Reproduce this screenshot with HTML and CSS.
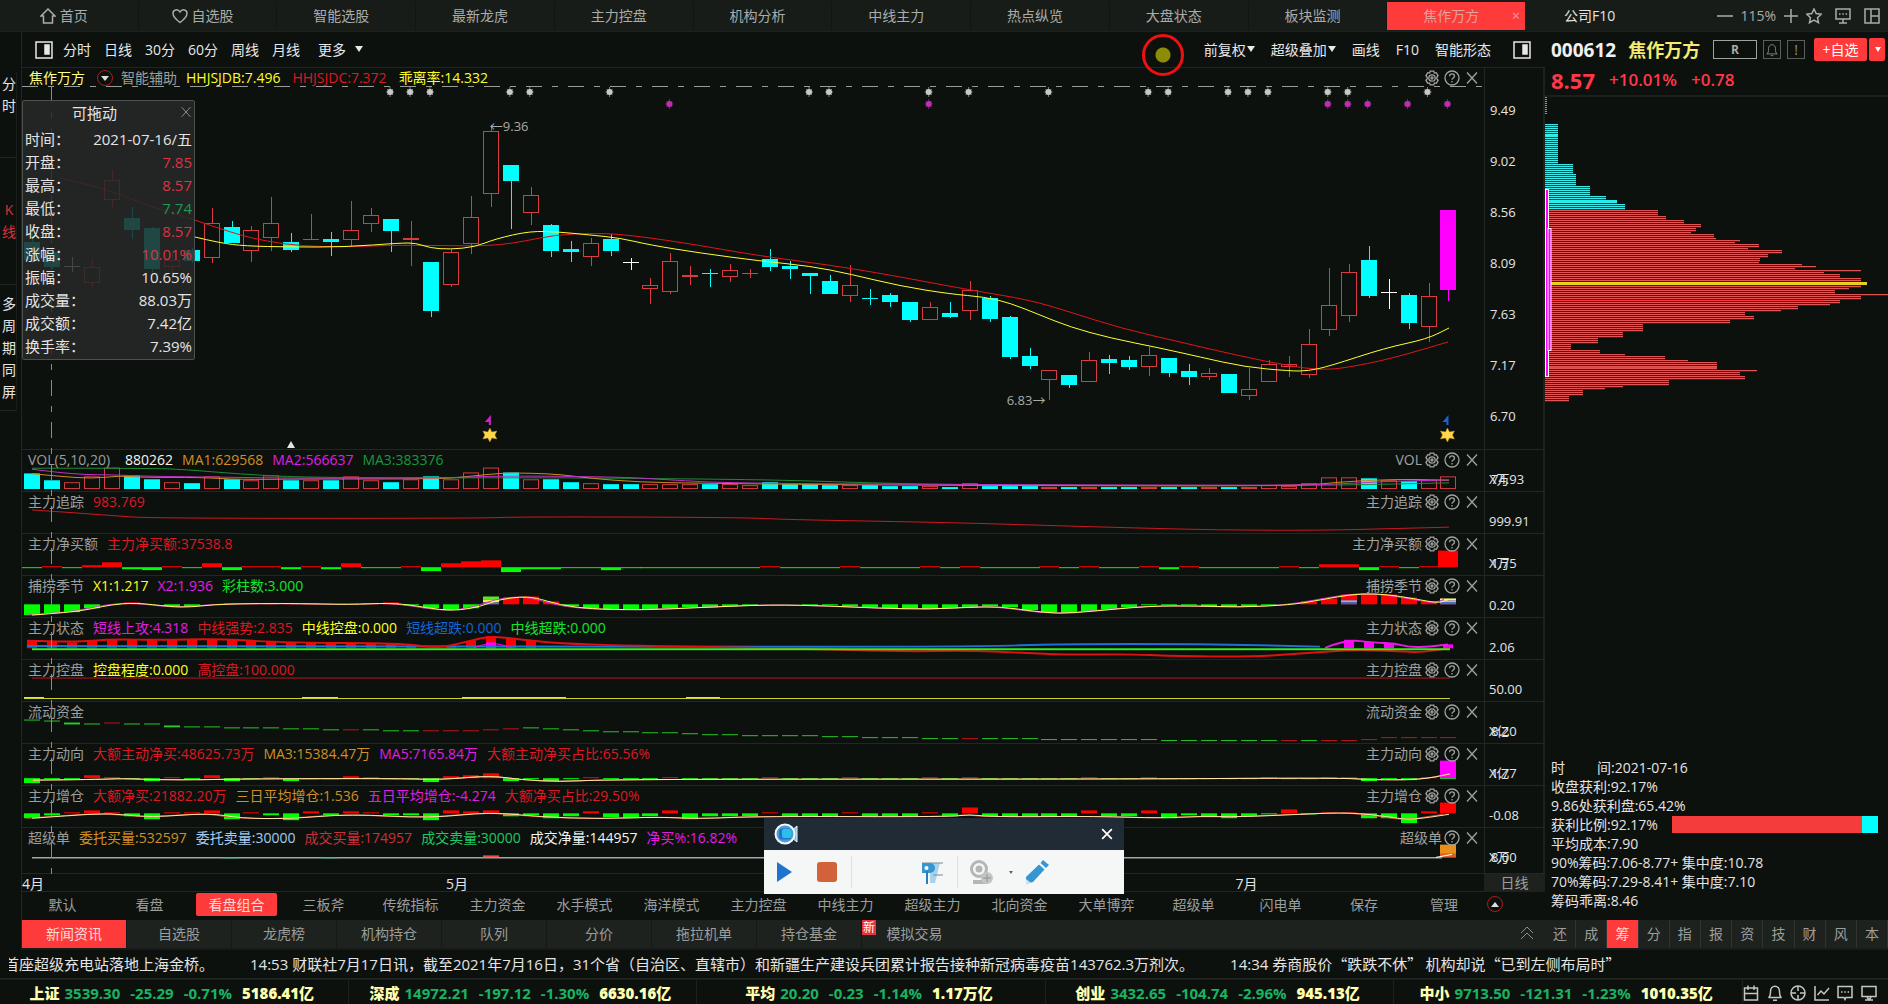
FILE: index.html
```html
<!DOCTYPE html>
<html lang="zh-CN">
<head>
<meta charset="utf-8">
<meta name="viewport" content="width=device-width, initial-scale=1">
<title>焦作万方 000612</title>
<link rel="stylesheet" href="styles.css">
</head>
<body>
<svg class="defs" aria-hidden="true">
  <symbol id="gear" viewBox="0 0 16 16"><path d="M6.200 1.200h3.600l.6 1.900 1.900-.4 1.800 3.100-1.300 1.500v1.400l1.300 1.500-1.800 3.100-1.900-.4-.6 1.900H6.200l-.6-1.900-1.900.4-1.800-3.100 1.300-1.500V7.300L1.900 5.800l1.800-3.100 1.900.4z"/><circle cx="8" cy="8" r="3.200"/><circle cx="8" cy="8" r="1"/></symbol>
  <symbol id="help" viewBox="0 0 16 16"><circle cx="8" cy="8" r="7"/><path d="M5.500 6.300c0-3.300 5-3.300 5 0 0 1.700-2.500 1.700-2.500 3.400M8 11v1.400"/></symbol>
  <symbol id="close" viewBox="0 0 16 16"><path d="M3 2.500l10 11M13 2.500l-10 11"/></symbol>
  <symbol id="pane" viewBox="0 0 18 18"><path d="M1 1h16v16H1z"/><path d="M10 4h4v9h-4z" fill="currentColor"/></symbol>
</svg>
<div class="app">
  <header class="topbar">
    <nav class="top-tabs">
      <button class="top-tab"><svg class="ic" viewBox="0 0 16 16"><path d="M1 8l7-7 7 7h-2.500v7h-9V8z"/></svg>首页</button>
      <button class="top-tab"><svg class="ic" viewBox="0 0 16 16"><path d="M8 14.500C2 10 1 7.500 1 5.200 1 1.500 6 .5 8 4c2-3.500 7-2.500 7 1.200 0 2.300-1 4.800-7 9.300z"/></svg>自选股</button>
      <button class="top-tab">智能选股</button>
      <button class="top-tab">最新龙虎</button>
      <button class="top-tab">主力控盘</button>
      <button class="top-tab">机构分析</button>
      <button class="top-tab">中线主力</button>
      <button class="top-tab">热点纵览</button>
      <button class="top-tab">大盘状态</button>
      <button class="top-tab">板块监测</button>
      <button class="top-tab active">焦作万方<span class="tab-x">×</span></button>
    </nav>
    <button class="company">公司F10</button>
    <div class="window-tools">
      <svg class="ic" viewBox="0 0 16 16"><path d="M0 8h16"/></svg>
      <span>115%</span>
      <svg class="ic" viewBox="0 0 16 16"><path d="M1 8h14M8 1v14"/></svg>
      <svg class="ic" viewBox="0 0 16 16"><path d="M8 1l2.200 4.600 5 .6-3.700 3.500 1 5L8 12.200l-4.500 2.500 1-5L.8 6.200l5-.6z"/></svg>
      <svg class="ic far" viewBox="0 0 16 16"><path d="M1 1h14v10H1zM8 11v4M4 15h8M4 6h1.500M7.300 6h1.500M10.600 6h1.500"/></svg>
      <svg class="ic far" viewBox="0 0 16 16"><path d="M1 1h14v14H1zM7 1v14M7 8h8"/></svg>
    </div>
  </header>

  <div class="body">
    <nav class="rail">
      <button class="rail-item r1">分时</button>
      <button class="rail-item r2 hot">K线</button>
      <button class="rail-item r3">多周期同屏</button>
    </nav>

    <main class="main">
      <div class="toolbar">
        <div class="tool-group">
          <svg class="pane"><use href="#pane"/></svg>
          <button>分时</button><button>日线</button><button>30分</button><button>60分</button><button>周线</button><button>月线</button>
          <button class="more">更多 <i class="caret"></i></button>
        </div>
        <div class="tool-group right">
          <button>前复权<i class="caret"></i></button><button>超级叠加<i class="caret"></i></button><button>画线</button><button>F10</button><button>智能形态</button>
          <svg class="pane last"><use href="#pane"/></svg>
        </div>
        <span class="pointer"></span>
      </div>

      <div class="charts">
        <section class="panel price">
          <div class="plot">
            <svg class="art" id="price" viewBox="0 0 1462 381" preserveAspectRatio="none"></svg>
            <div class="legend"><span class="c-pale">焦作万方</span><span class="drop"><i class="caret"></i></span><span class="aid">智能辅助</span><span class="c-yellow">HHJSJDB:7.496</span><span class="c-red">HHJSJDC:7.372</span><span class="c-yellow">乖离率:14.332</span></div>
            <div class="tools"><svg><use href="#gear"/></svg><svg><use href="#help"/></svg><svg><use href="#close"/></svg></div>
            <span class="peak">←9.36</span>
            <span class="trough">6.83→</span>
          </div>
          <div class="axis scale"><span>9.49</span><span>9.02</span><span>8.56</span><span>8.09</span><span>7.63</span><span>7.17</span><span>6.70</span></div>
        </section>

        <section class="panel">
          <div class="plot"><svg class="art" id="vol" viewBox="0 0 1462 42" preserveAspectRatio="none"></svg>
            <div class="legend"><span>VOL(5,10,20)</span><span class="c-white gap">880262</span><span class="c-orange">MA1:629568</span><span class="c-magenta">MA2:566637</span><span class="c-green">MA3:383376</span></div>
            <div class="tools"><span>VOL</span><svg><use href="#gear"/></svg><svg><use href="#help"/></svg><svg><use href="#close"/></svg></div></div>
          <div class="axis"><span>X万</span><span class="over">74.93</span></div>
        </section>
        <section class="panel">
          <div class="plot"><svg class="art" id="track" viewBox="0 0 1462 42" preserveAspectRatio="none"></svg>
            <div class="legend"><span>主力追踪</span><span class="c-red">983.769</span></div>
            <div class="tools"><span>主力追踪</span><svg><use href="#gear"/></svg><svg><use href="#help"/></svg><svg><use href="#close"/></svg></div></div>
          <div class="axis"><span>999.91</span></div>
        </section>
        <section class="panel">
          <div class="plot"><svg class="art" id="net" viewBox="0 0 1462 42" preserveAspectRatio="none"></svg>
            <div class="legend"><span>主力净买额</span><span class="c-red">主力净买额:37538.8</span></div>
            <div class="tools"><span>主力净买额</span><svg><use href="#gear"/></svg><svg><use href="#help"/></svg><svg><use href="#close"/></svg></div></div>
          <div class="axis"><span>X万</span><span class="over">1.75</span></div>
        </section>
        <section class="panel">
          <div class="plot"><svg class="art" id="season" viewBox="0 0 1462 42" preserveAspectRatio="none"></svg>
            <div class="legend"><span>捕捞季节</span><span class="c-yellow">X1:1.217</span><span class="c-magenta">X2:1.936</span><span class="c-lime">彩柱数:3.000</span></div>
            <div class="tools"><span>捕捞季节</span><svg><use href="#gear"/></svg><svg><use href="#help"/></svg><svg><use href="#close"/></svg></div></div>
          <div class="axis"><span>0.20</span></div>
        </section>
        <section class="panel">
          <div class="plot"><svg class="art" id="state" viewBox="0 0 1462 42" preserveAspectRatio="none"></svg>
            <div class="legend"><span>主力状态</span><span class="c-magenta">短线上攻:4.318</span><span class="c-red">中线强势:2.835</span><span class="c-yellow">中线控盘:0.000</span><span class="c-blue">短线超跌:0.000</span><span class="c-lime">中线超跌:0.000</span></div>
            <div class="tools"><span>主力状态</span><svg><use href="#gear"/></svg><svg><use href="#help"/></svg><svg><use href="#close"/></svg></div></div>
          <div class="axis"><span>2.06</span></div>
        </section>
        <section class="panel">
          <div class="plot"><svg class="art" id="control" viewBox="0 0 1462 42" preserveAspectRatio="none"></svg>
            <div class="legend"><span>主力控盘</span><span class="c-yellow">控盘程度:0.000</span><span class="c-red">高控盘:100.000</span></div>
            <div class="tools"><span>主力控盘</span><svg><use href="#gear"/></svg><svg><use href="#help"/></svg><svg><use href="#close"/></svg></div></div>
          <div class="axis"><span>50.00</span></div>
        </section>
        <section class="panel">
          <div class="plot"><svg class="art" id="flow" viewBox="0 0 1462 42" preserveAspectRatio="none"></svg>
            <div class="legend"><span>流动资金</span></div>
            <div class="tools"><span>流动资金</span><svg><use href="#gear"/></svg><svg><use href="#help"/></svg><svg><use href="#close"/></svg></div></div>
          <div class="axis"><span>X亿</span><span class="over">8.20</span></div>
        </section>
        <section class="panel">
          <div class="plot"><svg class="art" id="trend" viewBox="0 0 1462 42" preserveAspectRatio="none"></svg>
            <div class="legend"><span>主力动向</span><span class="c-red">大额主动净买:48625.73万</span><span class="c-orange">MA3:15384.47万</span><span class="c-magenta">MA5:7165.84万</span><span class="c-red">大额主动净买占比:65.56%</span></div>
            <div class="tools"><span>主力动向</span><svg><use href="#gear"/></svg><svg><use href="#help"/></svg><svg><use href="#close"/></svg></div></div>
          <div class="axis"><span>X亿</span><span class="over">1.77</span></div>
        </section>
        <section class="panel">
          <div class="plot"><svg class="art" id="add" viewBox="0 0 1462 42" preserveAspectRatio="none"></svg>
            <div class="legend"><span>主力增仓</span><span class="c-red">大额净买:21882.20万</span><span class="c-orange">三日平均增仓:1.536</span><span class="c-magenta">五日平均增仓:-4.274</span><span class="c-red">大额净买占比:29.50%</span></div>
            <div class="tools"><span>主力增仓</span><svg><use href="#gear"/></svg><svg><use href="#help"/></svg><svg><use href="#close"/></svg></div></div>
          <div class="axis"><span>-0.08</span></div>
        </section>
        <section class="panel tall">
          <div class="plot"><svg class="art" id="super" viewBox="0 0 1462 46" preserveAspectRatio="none"></svg>
            <div class="legend"><span>超级单</span><span class="c-orange">委托买量:532597</span><span class="c-ice">委托卖量:30000</span><span class="c-rose">成交买量:174957</span><span class="c-mint">成交卖量:30000</span><span class="c-white">成交净量:144957</span><span class="c-magenta">净买%:16.82%</span></div>
            <div class="tools"><span>超级单</span><svg><use href="#help"/></svg><svg><use href="#close"/></svg></div></div>
          <div class="axis"><span>X万</span><span class="over">8.00</span></div>
        </section>

        <span class="crosshair"></span>

        <aside class="quote">
          <h2>可拖动</h2>
          <button class="quote-x" aria-label="关闭"><svg><use href="#close"/></svg></button>
          <dl>
            <div><dt>时间：</dt><dd>2021-07-16/五</dd></div>
            <div><dt>开盘：</dt><dd class="up">7.85</dd></div>
            <div><dt>最高：</dt><dd class="up">8.57</dd></div>
            <div><dt>最低：</dt><dd class="down">7.74</dd></div>
            <div><dt>收盘：</dt><dd class="up">8.57</dd></div>
            <div><dt>涨幅：</dt><dd class="up">10.01%</dd></div>
            <div><dt>振幅：</dt><dd>10.65%</dd></div>
            <div><dt>成交量：</dt><dd>88.03万</dd></div>
            <div><dt>成交额：</dt><dd>7.42亿</dd></div>
            <div><dt>换手率：</dt><dd>7.39%</dd></div>
          </dl>
        </aside>
      </div>

      <div class="months">
        <div class="month-row"><span class="apr">4月</span><span class="may">5月</span><span>7月</span></div>
        <button class="period">日线</button>
      </div>

      <nav class="sets">
        <button>默认</button><button>看盘</button><button class="active">看盘组合</button><button>三板斧</button><button>传统指标</button><button>主力资金</button><button>水手模式</button><button>海洋模式</button><button>主力控盘</button><button>中线主力</button><button>超级主力</button><button>北向资金</button><button>大单博弈</button><button>超级单</button><button>闪电单</button><button class="act">保存</button><button class="act">管理</button>
        <span class="drop up-drop"><i class="caret up-caret"></i></span>
      </nav>

      <nav class="tabs">
        <button class="active">新闻资讯</button><button>自选股</button><button>龙虎榜</button><button>机构持仓</button><button>队列</button><button>分价</button><button>拖拉机单</button><button>持仓基金</button><button class="new">模拟交易<span class="badge">新</span></button>
        <svg class="fold" viewBox="0 0 16 16"><path d="M2 8l6-6 6 6M2 14l6-6 6 6"/></svg>
      </nav>
    </main>

    <aside class="side">
      <div class="side-head">
        <div class="name-row"><strong class="code">000612</strong><strong class="name">焦作万方</strong><span class="r-box">R</span>
          <button class="sq" aria-label="提醒"><svg viewBox="0 0 16 16"><path d="M2 13c2-1 2-3 2-6 0-6 8-6 8 0 0 3 0 5 2 6zM6.500 15h3"/></svg></button><button class="sq">!</button>
          <button class="add">+自选</button><button class="add-more" aria-label="更多"><i class="caret"></i></button></div>
        <div class="price-row"><strong>8.57</strong><b>+10.01%</b><b>+0.78</b></div>
      </div>
      <svg class="chips" id="chips" viewBox="0 0 343 320" preserveAspectRatio="none"></svg>
      <div class="stats">
        <p>时<span class="wide"></span>间:2021-07-16</p>
        <p>收盘获利:92.17%</p>
        <p>9.86处获利盘:65.42%</p>
        <p class="ratio">获利比例:92.17%<span class="bar"><i style="width:92.17%"></i></span></p>
        <p>平均成本:7.90</p>
        <p>90%筹码:7.06-8.77+ 集中度:10.78</p>
        <p>70%筹码:7.29-8.41+ 集中度:7.10</p>
        <p>筹码乖离:8.46</p>
      </div>
      <nav class="side-tabs"><button>还</button><button>成</button><button class="active">筹</button><button>分</button><button>指</button><button>报</button><button>资</button><button>技</button><button>财</button><button>风</button><button>本</button></nav>
    </aside>
  </div>

  <div class="news"><div class="marquee"><span>首座超级充电站落地上海金桥。</span><span>14:53 财联社7月17日讯，截至2021年7月16日，31个省（自治区、直辖市）和新疆生产建设兵团累计报告接种新冠病毒疫苗143762.3万剂次。</span><span>14:34 <span class="headline">券商股价“跌跌不休” 机构却说“已到左侧布局时”</span></span></div></div>

  <footer class="ticker">
    <div class="index"><b>上证</b><i>3539.30</i><i>-25.29</i><i>-0.71%</i><b>5186.41亿</b></div>
    <div class="index"><b>深成</b><i>14972.21</i><i>-197.12</i><i>-1.30%</i><b>6630.16亿</b></div>
    <div class="index"><b>平均</b><i>20.20</i><i>-0.23</i><i>-1.14%</i><b>1.17万亿</b></div>
    <div class="index"><b>创业</b><i>3432.65</i><i>-104.74</i><i>-2.96%</i><b>945.13亿</b></div>
    <div class="index"><b>中小</b><i>9713.50</i><i>-121.31</i><i>-1.23%</i><b>1010.35亿</b></div>
    <div class="foot-tools">
      <svg class="ic" viewBox="0 0 16 16"><path d="M1.500 3h13v12h-13zM1.500 8.500h13M5 .5V5M11 .5V5"/></svg>
      <svg class="ic" viewBox="0 0 16 16"><path d="M1.500 12.500c2-1 2-3 2-6 0-7 9-7 9 0 0 3 0 5 2 6zM6 15.200h4"/></svg>
      <svg class="ic" viewBox="0 0 16 16"><circle cx="8" cy="8" r="7"/><path d="M8 1v5M8 10v5M1 8h5M10 8h5"/></svg>
      <svg class="ic" viewBox="0 0 16 16"><path d="M1 1v14h14M3.500 10l3.500-4 3 3 5-6"/></svg>
      <svg class="ic" viewBox="0 0 16 16"><path d="M1 1.500h14v11H9l-1 2-1-2H1zM4 7h1.500M7.300 7h1.500M10.600 7h1.500"/></svg>
      <svg class="ic" viewBox="0 0 16 16"><path d="M1 1.500h14v10H1zM6 12l2 3 2-3M4 15h8"/></svg>
    </div>
  </footer>

  <div class="recorder">
    <div class="rec-title">
      <svg class="cam" viewBox="0 0 24 24"><path d="M17 9l6-5v16l-6-5z" fill="#7cc4ee" stroke="#eef6fb"/><circle cx="11" cy="12" r="9.500" fill="#4a9fd4" stroke="#f4f8fb" stroke-width="2"/><rect x="5" y="6.500" width="12" height="11" rx="3" fill="#2a6fd0"/><rect x="8" y="7" width="9" height="9" rx="2" fill="#2cc0e8"/></svg>
      <button aria-label="关闭"><svg viewBox="0 0 16 16"><path d="M2.500 2.500l11 11M13.500 2.500l-11 11"/></svg></button>
    </div>
    <div class="rec-body">
      <button aria-label="播放"><svg viewBox="0 0 24 24"><path d="M4 2l15 10L4 22z" fill="#1f74cf"/></svg></button>
      <button aria-label="停止" class="stop"><svg viewBox="0 0 24 24"><rect x="2" y="2" width="20" height="20" rx="3" fill="#d2623a"/></svg></button>
      <span class="rec-sep"></span>
      <button aria-label="标注" class="mark"><svg viewBox="0 0 24 24"><path d="M10 3h10l-5 20h-5z" fill="#a9d2ee"/><path d="M2 3h8a5 5 0 010 10H2z" fill="#3596d2"/><circle cx="6.500" cy="8" r="2" fill="#fff"/><path d="M7 11v13" stroke="#2b7fb8" stroke-width="2"/><path d="M2 3h21M13 15h10" stroke="#7c8a90"/></svg></button>
      <span class="rec-sep"></span>
      <button aria-label="摄像头" class="web"><svg viewBox="0 0 24 24"><circle cx="10" cy="9" r="7.500" stroke="#b4b6b6" stroke-width="3"/><circle cx="10" cy="9" r="3.500" fill="#b4b6b6"/><path d="M4 20h14v4H4z" fill="#b4b6b6"/><circle cx="18" cy="18" r="6" fill="#c4c6c6"/><path d="M18 14v8M14 18h8" stroke="#8f9292" stroke-width="1"/></svg></button>
      <i class="caret tiny"></i>
      <button aria-label="画笔"><svg viewBox="0 0 24 24"><path d="M14 4.500l5.500 5L8 22 1 24V17z" fill="#3596d2"/><path d="M15.500 3L18 0l6 5-3 3z" fill="#3596d2"/><path d="M1 19l5 4-5 1z" fill="#cfe4f2"/></svg></button>
    </div>
  </div>
</div>
<script src="app.js"></script>
</body>
</html>
```
FILE: styles.css
```css
* { box-sizing: border-box; }
html, body { height: 100%; }
body {
  margin: 0;
  background: #0d110e;
  color: #e4e4e4;
  font: 14px/20px "Open Sans", "Noto Sans CJK SC", sans-serif;
  overflow: hidden;
}
button { margin: 0; padding: 0; border: 0; background: none; color: inherit; font: inherit; white-space: nowrap; cursor: pointer; }
svg { fill: none; stroke: currentColor; }
h2, p, dl, dd { margin: 0; font: inherit; }
.defs { position: absolute; width: 0; height: 0; }
.ic { width: 16px; height: 16px; flex: none; stroke-width: 1.5; }
.caret { display: inline-block; border: 4px solid transparent; border-top: 6px solid currentColor; border-bottom: 0; vertical-align: 3px; margin-left: 1px; }

.c-pale { color: #ffff80; } .c-yellow { color: #ffff20; } .c-red { color: #dc1822; }
.c-white { color: #f4f4f4; } .c-orange { color: #cf8f24; } .c-magenta { color: #e01ee0; }
.c-green { color: #149a3c; } .c-lime { color: #14e42c; } .c-blue { color: #1466d2; }
.c-ice { color: #a8ccf0; } .c-rose { color: #c8323c; } .c-mint { color: #1fc864; }

.app { display: flex; flex-direction: column; height: 100vh; position: relative; }

.topbar { display: flex; align-items: center; height: 32px; background: #181c19; border-bottom: 1px solid #1e221f; color: #aaacaa; }
.top-tabs { display: flex; flex: 0 1 1526px; height: 100%; padding: 2px 0 1px; }
.top-tab { flex: 1; display: flex; align-items: center; justify-content: center; gap: 4px; position: relative; padding-right: 10px; border-right: 1px solid #121613; }
.top-tab.active { background: #ff3a3a; color: #e8a09a; }
.tab-x { position: absolute; right: 5px; }
.company { color: #e4e4e4; margin-left: 38px; }
.window-tools { margin-left: auto; display: flex; align-items: center; gap: 7px; padding-right: 8px; }
.window-tools .far { margin-left: 6px; }

.body { flex: 1; display: flex; min-height: 0; }
.rail { width: 22px; border-right: 1px solid #222623; display: flex; flex-direction: column; padding-top: 40px; color: #e4e4e4; }
.rail-item { width: 17px; padding-left: 2px; line-height: 22px; white-space: normal; word-break: break-all; text-align: center; border-bottom: 1px solid #222623; border-right: 1px solid #1a1e1b; }
.r1 { height: 86px; padding-bottom: 40px; }
.r2 { height: 127px; }
.r3 { height: 126px; }
.hot { color: #dc3038; }

.main { flex: 1; min-width: 0; display: flex; flex-direction: column; }
.toolbar { position: relative; display: flex; align-items: center; justify-content: space-between; height: 36px; padding: 0 14px 0 13px; border-bottom: 1px solid #222623; color: #e8e8e8; }
.tool-group { display: flex; align-items: center; gap: 13px; }
.tool-group.right { gap: 16px; }
.toolbar .more { margin-left: 5px; }
.more .caret { margin-left: 5px; }
.pane { width: 18px; height: 18px; stroke-width: 1.5; margin-right: -3px; flex: none; }
.pane.last { margin: 0 0 0 6px; }
.pointer { position: absolute; right: 361px; top: 2px; width: 42px; height: 42px; border: 3px solid #f01010; border-radius: 50%; background: radial-gradient(circle, #8c8c06 0 7px, transparent 8px); z-index: 3; }

.charts { flex: 1; min-height: 0; display: flex; flex-direction: column; position: relative; }
.panel { display: flex; height: 42px; flex: none; border-bottom: 1px solid #232724; }
.panel.price { flex: 1; }
.panel.tall { height: 46px; }
.plot { position: relative; flex: 1; min-width: 0; }
.art { position: absolute; inset: 0; width: 100%; height: 100%; }
.legend { position: relative; display: flex; align-items: center; gap: 9px; padding: 0 6px; height: 20px; color: #9c9e9c; white-space: nowrap; }
.legend .gap { margin-left: 6px; }
.price .legend { gap: 12px; padding-left: 7px; }
.legend .aid { margin-left: -4px; margin-right: -3px; }
.tools { position: absolute; right: 4px; top: 0; display: flex; align-items: center; gap: 4px; height: 19px; color: #a0a2a0; }
.tools svg { width: 16px; height: 16px; stroke-width: 1.3; }
.tools span { margin-right: -2px; line-height: 20px; }
.drop { width: 16px; height: 16px; border: 1px solid #b01820; border-radius: 50%; display: flex; align-items: center; justify-content: center; color: #ddd; flex: none; }
.drop .caret { margin: 0; border-width: 4px; border-top-width: 5px; border-bottom: 0; }
.axis { flex: none; width: 61px; border-left: 1px solid #232724; border-right: 2px solid #1e221f; padding: 20px 0 0 4px; display: grid; justify-items: start; font-size: 13px; line-height: 18px; color: #e4e4e4; }
.axis span { grid-area: 1 / 1; }
.axis .over { padding-left: 2px; }
.axis.scale { padding: 33px 0 24px 5px; display: flex; flex-direction: column; justify-content: space-between; }
.peak, .trough { position: absolute; color: #a8aaa8; font-size: 13px; line-height: 16px; }
.peak { left: 32%; top: 13%; }
.trough { right: 30%; top: 85%; }
.crosshair { position: absolute; left: 29px; top: 18px; bottom: 0; width: 1px; background: repeating-linear-gradient(#8a8c8a 0 16px, transparent 16px 26px, #8a8c8a 26px 32px, transparent 32px 42px); }

.quote { position: absolute; left: 0; top: 32px; width: 173px; height: 260px; padding: 1px 2px 0; background: rgba(38, 41, 39, .86); border: 1px solid #4c4f4d; border-radius: 2px; font-size: 15px; line-height: 23px; }
.quote h2 { text-align: center; padding-right: 28px; margin-bottom: 3px; }
.quote-x { position: absolute; right: 1px; top: 1px; width: 14px; height: 18px; color: #9a9c9a; }
.quote-x svg { width: 14px; height: 14px; }
.quote dl div { display: flex; justify-content: space-between; }
.quote .up { color: #dc3444; }
.quote .down { color: #1c9a54; }

.months { display: flex; height: 18px; flex: none; line-height: 20px; }
.month-row { flex: 1; display: flex; border-bottom: 1px solid #232724; }
.apr { width: 29%; }
.may { width: 54%; }
.period { width: 61px; background: #1e221f; color: #9c9e9c; line-height: 18px; }

.sets { display: flex; align-items: flex-start; gap: 6px; height: 28px; flex: none; padding-top: 1px; color: #9c9e9c; }
.sets button { flex: 0 1 81px; height: 23px; line-height: 22px; border-radius: 2px; }
.sets button.act { flex-basis: 74px; }
.sets .active { background: #ff3a3a; color: #ffdcd8; }
.up-drop { margin-top: 3px; }
.drop .up-caret { transform: rotate(180deg); }

.tabs { display: flex; height: 30px; flex: none; background: #1e221f; color: #9c9e9c; border-bottom: 2px solid #171a18; }
.tabs button { flex: 0 1 105px; border-right: 1px solid #151816; }
.tabs button.new { border: 0; position: relative; }
.tabs .active { background: #ff3a3a; color: #ffdcd8; }
.badge { position: absolute; left: 0; top: 0; width: 14px; height: 15px; background: #e8323c; color: #fff; font-size: 12px; line-height: 15px; }
.fold { width: 16px; height: 16px; margin: 5px 10px 0 auto; color: #8c8e8c; }

.side { width: 343px; flex: none; display: flex; flex-direction: column; }
.side-head { height: 65px; flex: none; border-bottom: 2px solid #1c201d; padding: 6px 3px 0 6px; }
.name-row { display: flex; align-items: center; height: 23px; }
.code { font-size: 19px; color: #f0f0f0; }
.name { font-size: 18px; color: #f4ec70; margin: 0 auto 0 12px; }
.r-box { width: 44px; height: 19px; border: 1px solid #a0a2a0; font-size: 12px; font-weight: bold; line-height: 17px; text-align: center; color: #aaa; margin-right: 6px; }
.sq { width: 18px; height: 19px; border: 1px solid #5c5e5c; color: #8c8e8c; line-height: 16px; margin-right: 6px; }
.sq svg { width: 14px; height: 15px; display: block; margin: 1px; }
.add { width: 53px; height: 23px; background: #ff3a3a; color: #fff; border-radius: 2px; margin-left: 3px; }
.add-more { width: 16px; height: 23px; background: #ff3a3a; color: #fff; border-radius: 2px; margin-left: 2px; }
.add-more .caret { border-width: 3px; border-top-width: 5px; border-bottom: 0; }
.price-row { display: flex; align-items: center; gap: 14px; height: 38px; color: #ff3848; font-size: 17px; }
.price-row strong { font-size: 22px; }
.price-row b { font-weight: 600; }
.chips { width: 100%; height: 320px; flex: none; }
.stats { margin-top: auto; padding: 0 10px 10px 6px; line-height: 19px; }
.wide { display: inline-block; width: 32px; }
.ratio { display: flex; align-items: center; gap: 14px; }
.bar { flex: 1; height: 17px; background: #0ff; }
.bar i { display: block; height: 100%; background: #f43c3a; }
.side-tabs { display: flex; height: 30px; flex: none; background: #1e221f; color: #9c9e9c; border-bottom: 2px solid #171a18; }
.side-tabs button { flex: 1; border-right: 1px solid #313432; }
.side-tabs .active { background: #ff3a3a; color: #ffdcd8; }

.news { height: 29px; flex: none; padding: 0 9px; font-size: 15px; line-height: 28px; border-bottom: 1px solid #232724; }
.marquee { display: flex; gap: 36px; height: 28px; overflow: hidden; white-space: nowrap; }
.marquee > span:first-child { margin-left: -5px; }
.headline { font-family: "Noto Sans CJK SC", sans-serif; }
.ticker { display: flex; height: 25px; flex: none; border-top: 1px solid #1a1e1b; font-size: 15px; font-weight: bold; }
.index { flex: 1; display: flex; align-items: center; justify-content: center; padding: 2px 4px 0 0; border-right: 1px solid #1e221f; white-space: nowrap; color: #ffffb0; }
.index i { font-style: normal; color: #18b462; margin-left: 10px; }
.index b + i { margin-left: 5px; }
.index i + b { margin-left: 10px; }
.foot-tools { width: 145px; display: flex; align-items: center; justify-content: space-between; padding: 2px 11px 0 0; color: #c4c6c4; }

.recorder { position: absolute; left: 764px; bottom: 110px; width: 360px; background: #f5f7f7; z-index: 4; }
.rec-title { display: flex; align-items: center; justify-content: space-between; height: 32px; padding: 0 10px; background: #212b36; color: #fff; }
.rec-title .cam { width: 24px; height: 24px; stroke: none; }
.rec-title button svg { width: 14px; height: 14px; display: block; stroke-width: 2; }
.rec-body { display: flex; align-items: center; height: 44px; padding-left: 9px; }
.rec-body button svg { width: 24px; height: 24px; display: block; stroke: none; }
.rec-body .stop { margin: 0 12px 0 18px; }
.rec-sep { width: 1px; height: 32px; background: #dfe2e2; }
.rec-body .mark { margin: 0 13px 0 68px; }
.rec-body .web { margin-left: 11px; }
.tiny { color: #666; border-width: 2px; border-top-width: 3px; border-bottom: 0; margin: 0 12px 0 16px; }
```
FILE: app.js
```js
const COUNT = 72;
const CYAN = '#00ffff', RED = '#d83c40', LIME = '#00ff00', HOT = '#ff0000', MAG = '#ff00ff';
const cx = i => 10 + 19.95 * i;
const rect = (x, y, w, h, fill) => `<rect x="${x}" y="${y}" width="${w}" height="${h}" fill="${fill}" stroke="none"/>`;
const box = (x, y, w, h, c) => `<rect x="${x}" y="${y}" width="${w}" height="${h}" stroke="${c}"/>`;
const seg = (x1, y1, x2, y2, c, w = 1) => `<path d="M${x1} ${y1}L${x2} ${y2}" stroke="${c}" stroke-width="${w}"/>`;
const put = (id, html) => { document.getElementById(id).innerHTML = html; };

/* Smooth path through points; levels are kept in thirds of a pixel above a panel origin. */
function curve(points, origin, color, width = 1, dx = 0) {
  const p = points.map(([x, y]) => [x - 22 + dx, (y - origin) / 3]);
  let d = `M${p[0]}`;
  for (let k = 1; k < p.length - 1; k++) {
    d += `Q${p[k]} ${(p[k][0] + p[k + 1][0]) / 2},${(p[k][1] + p[k + 1][1]) / 2}`;
  }
  d += `L${p[p.length - 1]}`;
  return `<path d="${d}" stroke="${color}" stroke-width="${width}"/>`;
}
function at(points, x) {
  for (let k = 1; k < points.length; k++) {
    const [x0, y0] = points[k - 1], [x1, y1] = points[k];
    if (x <= x1) return y0 + (y1 - y0) * Math.max(0, x - x0) / (x1 - x0);
  }
  return points[points.length - 1][1];
}

/* kind, high, top, bottom, low */
const candles = `C 700 725 780 790|C 740 755 800 806|W 770 798 800 815|R 780 800 850 860|R 510 540 600 620|C 620 655 690 718|C 680 683 808 815|R 760 780 800 820|C 745 750 783 790|R 625 670 773 788|C 663 681 730 730|R 678 691 752 785|R 592 670 715 752|C 698 726 750 755|R 643 717 719 719|C 697 717 725 767|R 602 691 719 740|R 625 646 671 695|C 657 657 692 755|R 663 714 721 798|C 786 786 932 950|R 748 757 854 861|R 587 652 731 762|R 375 394 583 622|C 495 495 543 686|R 562 586 640 674|C 673 675 752 772|C 723 747 755 785|R 715 730 772 797|C 703 717 752 767|W 773 785 787 809|R 833 855 868 912|R 758 784 875 881|R 797 825 832 856|C 808 820 823 861|R 792 811 830 846|R 808 820 822 833|C 747 777 800 812|C 782 797 806 836|C 819 819 828 882|C 826 843 881 881|R 796 855 887 906|C 868 894 897 914|C 879 885 905 921|C 906 906 960 965|R 906 921 959 959|C 906 939 950 955|R 842 870 934 960|C 888 894 957 965|C 948 951 1071 1076|C 1045 1068 1098 1106|R 1111 1111 1139 1200|C 1125 1125 1155 1163|R 1056 1080 1145 1145|C 1065 1077 1088 1123|C 1068 1080 1101 1109|R 1040 1066 1100 1128|C 1074 1074 1118 1131|C 1092 1113 1130 1156|R 1104 1119 1130 1140|C 1122 1122 1178 1178|R 1105 1168 1187 1201|R 1080 1093 1147 1147|R 1068 1093 1101 1130|R 988 1033 1124 1133|R 805 916 989 1007|R 793 817 949 967|C 738 780 888 893|W 837 876 878 927|C 879 885 969 987|R 850 888 980 1027|M 630 630 870 903`.split('|').map(s => s.split(' '));

const Y = v => (v - 204) / 3;
let out = `<path d="M0 18.5H1460" stroke="#9a9c9a" stroke-dasharray="16 10 6 10"/>`;
candles.forEach(([kind, ...v], i) => {
  const [hi, top, bot, lo] = v.map(n => Math.round(Y(+n)));
  const x = Math.round(cx(i)), c = { C: CYAN, R: RED, W: '#fff', M: MAG }[kind];
  if (kind === 'W') { out += rect(x, hi, 1, lo - hi, c) + rect(x - 8, top, 16, 1, c); return; }
  if (kind === 'R' && bot - top > 1) {
    out += rect(x, hi, 1, top - hi, c) + rect(x, bot, 1, lo - bot, c) + box(x - 7.5, top + .5, 15, bot - top - 1, c);
  } else {
    out += rect(x, hi, 1, lo - hi, c) + rect(x - 8, top, 16, Math.max(1, bot - top), c);
  }
});
const slow = [[60,534],[100,560],[150,620],[195,660],[215,681],[240,705],[265,723],[300,738],[345,741],[400,735],[470,738],[500,735],[525,723],[555,705],[590,700],[620,702],[680,726],[760,768],[830,795],[890,825],[970,870],[1030,900],[1070,936],[1120,984],[1180,1026],[1240,1068],[1290,1098],[1320,1110],[1345,1104],[1390,1077],[1448,1026]];
const fast = [[195,711],[220,729],[245,738],[290,741],[345,741],[400,729],[416,729],[430,744],[450,748],[475,741],[495,717],[530,693],[560,696],[590,705],[620,714],[650,735],[700,759],[760,783],[810,798],[850,822],[900,858],[950,882],[985,891],[1010,909],[1040,945],[1070,981],[1110,1014],[1160,1044],[1200,1071],[1245,1101],[1290,1113],[1308,1113],[1330,1098],[1385,1044],[1427,1017],[1449,984]];
out += curve(slow, 204, '#e0141c') + curve(fast, 204, '#ffff30');
const burst = (x, y, c) => `<path d="M${x - 4} ${y}h8M${x} ${y - 5}v10M${x - 3} ${y - 3}l6 6M${x + 3} ${y - 3}l-6 6" stroke="${c}" opacity=".6"/><circle cx="${x}" cy="${y}" r="3" fill="${c}" stroke="none"/>`;
[18,19,20,24,25,29,39,40,45,47,51,56,57,60,61,62,65,66,70].forEach(i => { out += burst(cx(i) - 1, 24, '#c8cac8'); });
[32,45,65,66,67,69,71].forEach(i => { out += burst(cx(i) - 1, 36, '#c02cb4'); });
const star = x => `<path d="M${x} 360l2 4 5-1-2 4 2 4-5-1-2 4-2-4-5 1 2-4-2-4 5 1z" fill="#ffd84c" stroke="#b88a20" stroke-width=".5"/>`;
[[23, '#d020d0'], [71, '#1464e0']].forEach(([i, c]) => {
  out += `<path d="M${cx(i) - 6} 354l6-7v10h-2v-3z" fill="${c}" stroke="none"/>` + star(cx(i) - 1);
});
out += '<path d="M265 380l4-7 4 7z" fill="#e4e4e4" stroke="none"/>';
put('price', out);

/* Turnover: bar tops */
const vol = [129,150,157,140,112,137,147,157,159,139,147,151,136,150,150,152,140,150,156,149,139,147,127,112,127,147,147,156,160,162,162,163,162,163,163,164,166,156,164,164,165,166,167,168,168,170,171,160,168,168,168,172,171,172,171,171,172,171,171,173,171,172,166,169,160,142,142,144,150,153,150,139];
out = '';
vol.forEach((t, i) => {
  const h = Math.round((178 - t) / 3), x = Math.round(cx(i)) - 8;
  const solid = 'CW'.includes(candles[i][0]) && i !== 2 && i !== 68;
  out += solid ? rect(x, 40 - h, 16, h, CYAN) : box(x + .5, 40.5 - h, 15, h - 1, RED);
});
out += curve([[32,115],[150,115],[185,119],[240,133],[300,143],[440,145],[560,144],[730,149],[800,153],[870,160],[960,166],[1290,170],[1449,160]], 59, '#1c8c34');
out += curve([[32,132],[60,140],[92,147],[120,138],[140,143],[200,143],[240,150],[300,148],[440,148],[470,140],[500,130],[530,130],[560,134],[590,146],[640,158],[700,161],[780,164],[960,168],[1300,170],[1340,157],[1380,151],[1410,149],[1449,152]], 59, '#d08c20');
out += curve([[32,118],[55,127],[85,135],[110,135],[150,140],[210,142],[300,146],[450,145],[500,138],[624,142],[670,151],[730,161],[950,165],[1200,167],[1320,167],[1380,156],[1449,151]], 59, '#c030c8');
put('vol', out);

put('track', curve([[32,239],[70,247],[110,256],[152,265],[478,265],[520,260],[738,262],[790,269],[900,275],[975,280],[1060,288],[1130,294],[1220,301],[1320,302],[1400,296],[1449,292]], 184, '#cc1820'));

/* Sparse bar series: index -> height, everything else is `rest` */
function bars(map, rest, base, w) {
  let s = '';
  for (let i = 0; i < COUNT; i++) {
    const v = i in map ? map[i] : rest, h = Math.max(1, Math.round(Math.abs(v) / 3));
    s += rect(Math.round(cx(i)) - w / 2, v > 0 ? base - h : base, w, h, v > 0 ? HOT : LIME);
  }
  return s;
}
put('net', bars({0:-4,1:2,3:5,4:14,5:-5,6:-8,7:2,9:11,10:-9,11:2,12:2,13:-5,14:2,15:-5,16:11,18:-4,19:2,20:-12,21:11,22:17,23:20,24:-15,25:-5,26:-5,29:-8,37:2,41:2,45:2,47:2,51:2,53:2,56:2,57:-6,58:2,63:2,65:8,66:8,67:-9,68:2,70:2,71:52}, -2, 34, 20));

const wave = [[32,556],[70,548],[95,535],[110,525],[135,518],[170,530],[190,532],[220,522],[290,520],[350,524],[390,519],[415,527],[440,540],[460,541],[480,530],[500,508],[520,500],[535,502],[560,525],[590,537],[640,541],[700,533],[770,524],[830,528],[880,535],[930,538],[970,532],[1000,530],[1030,543],[1060,552],[1090,545],[1150,528],[1200,528],[1240,532],[1290,525],[1320,510],[1350,493],[1375,490],[1400,498],[1430,515],[1440,518],[1449,508]];
out = '';
for (let i = 0; i < COUNT; i++) {
  const h = Math.round((at(wave, cx(i) + 22) - 524) / 3);
  if (h) out += rect(Math.round(cx(i)) - 8, h > 0 ? 29 : 29 + h, 16, Math.abs(h), h > 0 ? LIME : HOT);
}
out += rect(461, 21, 16, 3, '#58e828') + rect(461, 24, 16, 3, '#f0f040') + rect(461, 27, 16, 2, '#1888f0');
out += rect(1319, 25, 16, 2, '#60c8ff') + rect(1319, 27, 16, 2, '#1070e0');
out += rect(1418, 23, 16, 2, '#fff080') + rect(1418, 25, 16, 2, '#60d8ff') + rect(1418, 27, 16, 2, '#1080f0');
out += curve(wave, 436, '#d838d0', 1, -5) + curve(wave, 436, '#ffff60');
put('season', out);

const strong = [[27,632],[75,637],[110,627],[160,630],[215,626],[290,638],[400,640],[430,652],[445,650],[470,633],[490,617],[520,628],[560,640],[620,646],[700,651],[800,656],[900,665],[970,662],[1030,670],[1070,675],[1130,673],[1170,679],[1250,681],[1300,672],[1350,660],[1400,664],[1420,668],[1449,655]];
const attack = [[1325,654],[1346,628],[1375,638],[1395,640],[1410,652],[1430,650],[1448,643]];
out = '';
for (let i = 0; i < 26; i++) {
  const y = (at(strong, cx(i) + 22) - 562) / 3;
  if (y < 28) out += rect(Math.round(cx(i)) - 5, y, 10, 31 - y, HOT);
}
[66, 67, 68, 71].forEach(i => { const y = (at(attack, cx(i) + 22) - 562) / 3; out += rect(Math.round(cx(i)) - 5, y, 10, 31 - y, MAG); });
out += rect(464, 25, 10, 6, MAG);
out += curve([[27,648],[620,651],[980,650],[1060,642],[1200,642],[1320,650]], 562, '#1c70d8', 2);
out += curve(strong, 562, '#e01010', 2) + curve(attack, 562, '#e818e8', 2) + curve([[474,653],[490,635],[512,653]], 562, MAG);
out += rect(10, 31, 1418, 2, '#30f020');
put('state', out);

put('control', rect(10, 18, 1418, 1, '#b81820') + rect(2, 39, 1426, 1, '#d8e030') + rect(2, 38, 20, 1, '#ffff20') + rect(280, 38, 36, 1, '#ffff20') + rect(440, 38, 104, 1, '#ffff20') + rect(664, 38, 34, 1, '#ffff20'));

const level = [[0,-2],[1,2],[2,6],[3,9],[4,8],[6,11],[7,15],[8,19],[12,23],[15,27],[18,30],[22,31],[24,26],[25,22],[26,25],[29,33],[31,36],[34,43],[38,46],[43,52],[47,56],[50,56],[59,61],[66,60],[68,53],[71,52]];
const outflow = [4,16,20,21,22,23,24,47,63,65,66,67,68,69,70,71];
out = '';
for (let i = 0; i < COUNT; i++) {
  out += rect(Math.round(cx(i)) - 8, Math.round((at(level, i) + 56) / 3), 16, i === 2 || i === 7 ? 2 : 1, outflow.includes(i) ? '#c01418' : '#28c828');
}
put('flow', out);

const drift = [[32,181],[100,179],[120,176],[160,180],[200,180],[250,177],[400,176],[440,180],[490,167],[520,180],[560,186],[600,180],[760,178],[1100,178],[1340,174],[1370,180],[1420,180],[1449,162]];
put('trend', bars({0:-14,3:10,4:3,6:-8,7:2,9:10,10:-9,12:2,13:-9,16:5,17:3,20:-12,21:6,22:10,23:16,24:-10,26:-9,28:3,32:3,37:3,41:3,45:3,47:3,53:3,56:3,62:2,65:2,66:2,67:-9,69:-6,70:2}, -2, 35, 16)
  + rect(1418, 17, 16, 18, MAG) + curve(drift, 70, '#e08020') + curve(drift, 70, '#ffe8b0', 1, 1));

const build = [[32,296],[70,288],[110,280],[150,294],[210,280],[240,296],[290,298],[350,283],[430,296],[490,277],[540,292],[600,298],[660,292],[700,298],[760,290],[950,292],[970,284],[990,292],[1100,290],[1160,296],[1200,290],[1240,292],[1300,284],[1350,278],[1390,292],[1410,302],[1449,284]];
put('add', bars({0:-15,1:-5,2:3,3:9,4:3,5:-10,6:-18,7:3,8:3,9:10,10:-19,11:4,12:-5,13:-22,14:6,15:-5,16:6,17:3,18:-6,19:-5,20:-20,21:9,22:7,23:9,24:-9,25:-7,26:-14,27:-9,28:6,29:-12,30:-14,31:-10,32:10,33:-18,37:4,41:4,45:4,47:18,53:10,56:10,57:-15,58:-5,60:-16,62:-3,63:11,64:-3,65:4,66:4,67:-14,68:-14,69:-30,70:5,71:34}, -9, 28, 16)
  + curve(build, 197, '#e04818', 1, -6) + curve(build, 197, '#ffe8b0'));

put('super', rect(10, 30, 1410, 1, '#f4f4f4') + rect(461, 28, 16, 2, '#e8504c') + rect(200, 30, 16, 1, '#30c870') + rect(300, 30, 16, 1, '#30c870')
  + rect(1418, 17, 16, 13, '#e8901c') + rect(1418, 26, 16, 4, '#d86020') + seg(1414, 30, 1430, 27, '#fff'));

/* Chip distribution: [distance from top, length] */
const chip = [[27,13],[66,28],[76,31],[89,45],[99,61],[103,72],[107,80],[112,113],[119,121],[123,139],[127,156],[131,151],[134,146],[136,169],[140,171],[142,195],[144,190],[146,214],[150,203],[153,237],[156,223],[160,215],[164,214],[166,257],[168,271],[170,250],[172,316],[175,279],[177,295],[180,316],[186,316],[190,304],[193,290],[196,343],[199,316],[202,295],[206,285],[209,253],[212,236],[215,200],[218,209],[222,185],[226,98],[234,78],[240,53],[247,26],[252,55],[256,80],[259,120],[262,143],[265,172],[270,172],[273,212],[275,195],[278,200],[283,124],[288,78],[290,60],[292,38],[299,24],[305,24]];
out = '';
for (let y = 0; y < 18; y += 2) out += rect(0, y, 2, 1, '#1cc8c8');
let k = 0;
for (let y = 27; y < 305; y += 2) {
  while (k < chip.length - 1 && chip[k + 1][0] <= y) k++;
  const blue = y < 112;
  out += rect(0, y, chip[k][1], 1, blue ? '#3ce8e8' : '#e05454') + rect(0, y + 1, chip[k][1], 1, blue ? '#124848' : '#4c1a1b');
}
out += rect(0, 38, 13, 2, '#20f0f0') + rect(0, 103, 72, 2, '#20f0f0');
out += rect(0, 203, 279, 1, '#ff3838') + rect(0, 270, 172, 1, '#ff3838');
out += rect(0, 185, 322, 3, '#e4d020');
out += `<rect x=".5" y="92.500" width="3" height="187" fill="#ff00ff" stroke="#fff"/><rect x="3" y="131.500" width="3" height="122" fill="#ff00ff" stroke="#fff"/>`;
put('chips', out);
```
